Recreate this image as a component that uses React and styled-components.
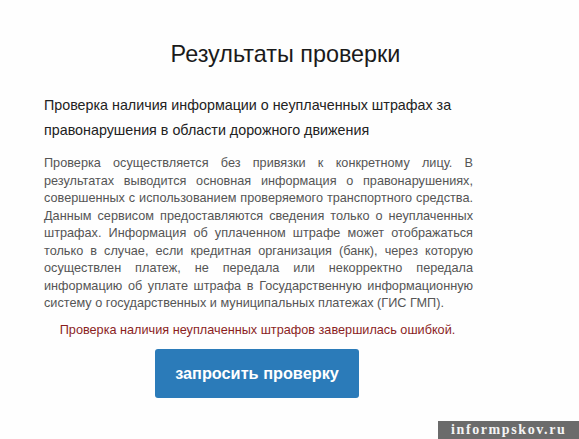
import React from "react";
import styled, { createGlobalStyle } from "styled-components";

const Global = createGlobalStyle`
  html, body { margin: 0; padding: 0; background: #fff; }
  body { font-family: "Liberation Sans", Arial, sans-serif; }
`;

const Page = styled.div`
  position: relative;
  width: 579px;
  height: 439px;
  overflow: hidden;
  background: #fefefe;
`;

const Title = styled.h1`
  margin: 0;
  padding: 40px 8px 0 0;
  text-align: center;
  font-weight: normal;
  font-size: 23.4px;
  line-height: 28px;
  color: #1a1a1a;
`;

const Column = styled.div`
  width: 429px;
  margin: 0 0 0 44px;
  display: flex;
  flex-direction: column;
`;

const Subtitle = styled.h2`
  margin: 25px 0 0;
  font-weight: normal;
  font-size: 14.3px;
  line-height: 25px;
  color: #222;
`;

const Body = styled.p`
  margin: 12px 0 0;
  font-size: 12.7px;
  line-height: 17.5px;
  color: #555;
  text-align: justify;
`;

const Error = styled.p`
  margin: 8px 0 0;
  padding-right: 2px;
  text-align: center;
  font-size: 12.7px;
  line-height: 18px;
  color: #8b1e1e;
`;

const Button = styled.button`
  align-self: center;
  margin: 10px 3px 0 0;
  width: 204px;
  height: 49px;
  border: none;
  border-radius: 3px;
  background: #2b7bb9;
  color: #fff;
  font-family: "Liberation Sans", Arial, sans-serif;
  font-weight: bold;
  font-size: 16.3px;
  cursor: pointer;
`;

const Watermark = styled.div`
  position: absolute;
  right: 0;
  bottom: 0;
  width: 128px;
  height: 18px;
  padding-left: 13px;
  background: #6b6b6b;
  color: #f4f4f4;
  font-family: "Liberation Serif", "DejaVu Serif", serif;
  font-weight: bold;
  font-size: 14px;
  line-height: 18px;
  letter-spacing: 1.6px;
`;

export default function App() {
  return (
    <Page>
      <Global />
      <Title>Результаты проверки</Title>
      <Column>
        <Subtitle>
          Проверка наличия информации о неуплаченных штрафах за правонарушения в области дорожного движения
        </Subtitle>
        <Body>
          Проверка осуществляется без привязки к конкретному лицу. В результатах выводится основная
          информация о правонарушениях, совершенных с использованием проверяемого транспортного
          средства. Данным сервисом предоставляются сведения только о неуплаченных штрафах.
          Информация об уплаченном штрафе может отображаться только в случае, если кредитная
          организация (банк), через которую осуществлен платеж, не передала или некорректно передала
          информацию об уплате штрафа в Государственную информационную систему о государственных и
          муниципальных платежах (ГИС ГМП).
        </Body>
        <Error>Проверка наличия неуплаченных штрафов завершилась ошибкой.</Error>
        <Button>запросить проверку</Button>
      </Column>
      <Watermark>informpskov.ru</Watermark>
    </Page>
  );
}
